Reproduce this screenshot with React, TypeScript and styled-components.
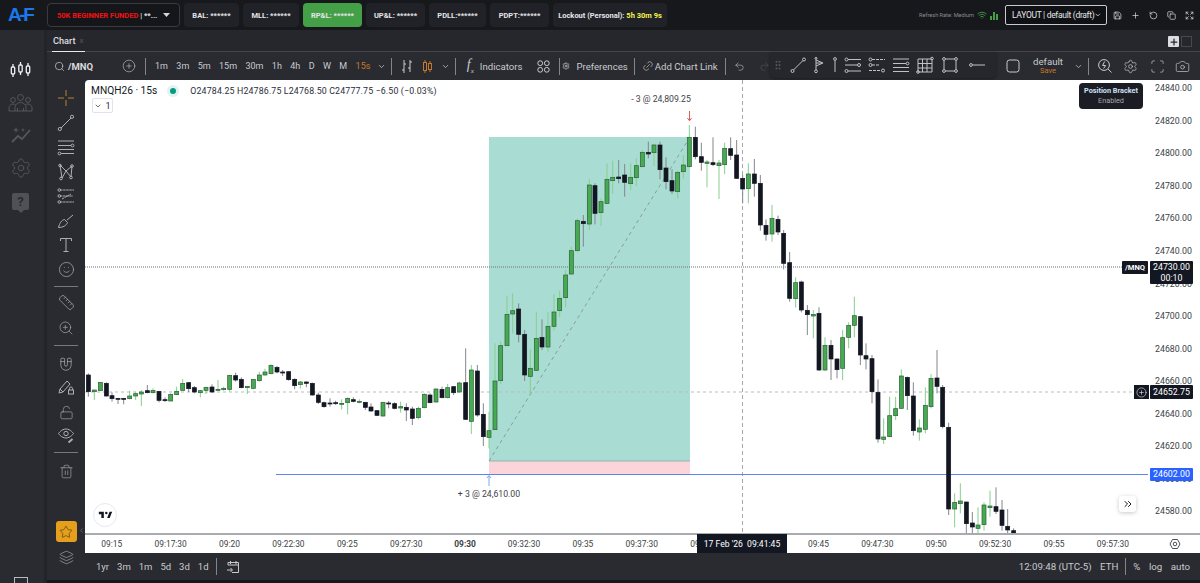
import React from 'react'
import styled, { createGlobalStyle } from 'styled-components'
import {
  Camera, ChevronDown, ChevronLeft, ChevronsRight, CirclePlus, Copy, Expand, Layers, Link2, LockOpen, Magnet,
  Plus, Redo2, RotateCcw, Ruler, Save, Scan, Search, Settings, Smile, Star, Trash2, Undo2, Wifi, ZoomIn
} from 'lucide-react'

const GlobalStyle = createGlobalStyle`
  html, body { margin: 0; padding: 0; height: 100%; overflow: hidden; background: #17181c; }
  #root { height: 100%; }
  * { box-sizing: border-box; }
`

const Page = styled.div`
  display: flex;
  flex-direction: column;
  width: 1200px;
  height: 583px;
  font-family: Roboto, "Liberation Sans", sans-serif;
  color: #d5d6d9;
  overflow: hidden;
`

/* ---------- shared icon helpers ---------- */
const Glyph = styled.svg<{ $w?: number; $h?: number; $ml?: number; $color?: string }>`
  flex: none;
  width: ${p => p.$w ?? 18}px;
  height: ${p => p.$h ?? 18}px;
  margin-left: ${p => p.$ml ?? 0}px;
  fill: none;
  stroke: ${p => p.$color ?? 'currentColor'};
  stroke-width: 1;
`
const Slot = styled.span<{ $ml?: number; $color?: string; $turn?: number }>`
  display: inline-flex;
  flex: none;
  margin-left: ${p => p.$ml ?? 0}px;
  color: ${p => p.$color ?? 'inherit'};
  transform: rotate(${p => p.$turn ?? 0}deg);
`

/* ---------- top bar ---------- */
const TopBar = styled.header`
  display: flex;
  align-items: center;
  flex: 0 0 30px;
  padding: 0 6.5px 0 0;
  background: #17181c;
`
const Logo = styled.div`
  width: 47px;
  padding-left: 8px;
  font: 900 19px "Liberation Sans", sans-serif;
  letter-spacing: -2.4px;
  color: #1a78ee;
`
const Pills = styled.div`
  display: flex;
  gap: 4px;
`
const Pill = styled.div<{ $w: number; $green?: boolean }>`
  display: flex;
  align-items: center;
  justify-content: center;
  width: ${p => p.$w}px;
  height: 24px;
  border-radius: 4px;
  background: ${p => (p.$green ? '#43a047' : '#212228')};
  font: 700 7.5px "Roboto", sans-serif;
  color: #e4e5e8;
  white-space: nowrap;
`
const AccountPill = styled(Pill)`
  justify-content: space-between;
  padding: 0 9px;
  background: #15161a;
  border: 1px solid #3a3b41;
`
const RedText = styled.span`
  color: #f01212;
`
const YellowText = styled.span`
  color: #f4f44a;
`
const Refresh = styled.div`
  display: flex;
  align-items: center;
  gap: 3px;
  margin-left: auto;
  font-size: 5.6px;
  color: #8b8c92;
`
const SignalBars = styled.svg`
  width: 8px;
  height: 9px;
  fill: #43a047;
`
const LayoutSelect = styled.div`
  display: flex;
  align-items: center;
  justify-content: space-between;
  width: 102px;
  height: 20px;
  margin: 0 0 0 7px;
  padding: 0 4px 0 6px;
  border: 1px solid #c9cacd;
  border-radius: 2px;
  background: #101114;
  font-size: 8.5px;
  letter-spacing: -0.3px;
  white-space: nowrap;
  color: #e6e7ea;
`
const TopActions = styled.div`
  display: flex;
  align-items: center;
  gap: 9px;
  margin-left: 5.5px;
  color: #d2d3d6;
`

/* ---------- shell ---------- */
const Shell = styled.div`
  display: flex;
  flex: 1;
  min-height: 0;
`
const Nav = styled.nav`
  display: flex;
  flex-direction: column;
  align-items: center;
  flex: 0 0 47px;
  padding: 29px 3px 0 0;
  gap: 10.5px;
  background: #2a2b30;
  border-right: 3px solid #232428;
  color: #55565c;
  overflow: hidden;
`
const NavItem = styled.div<{ $on?: boolean }>`
  display: flex;
  align-items: center;
  justify-content: center;
  height: 22px;
  width: 100%;
  color: ${p => (p.$on ? '#f1f1f3' : 'inherit')};
`
const NavChart = styled(Glyph)`
  stroke-width: 1.3;
`
const HelpBadge = styled.div`
  position: relative;
  display: flex;
  align-items: center;
  justify-content: center;
  width: 17px;
  height: 17px;
  margin-top: 2px;
  border-radius: 2px;
  background: #505157;
  font: 700 13px "Roboto", sans-serif;
  color: #2a2b30;
  &::after {
    content: '';
    position: absolute;
    bottom: -3px;
    left: 6px;
    border: 3px solid transparent;
    border-bottom: 0;
    border-top-color: #505157;
  }
`
const NavFoot = styled.div`
  width: 14px;
  height: 14px;
  margin-top: auto;
  margin-bottom: -8px;
  border: 1.4px solid #b9babd;
`
const Main = styled.main`
  display: flex;
  flex-direction: column;
  flex: 1;
  min-width: 0;
  background: #2a2b31;
`

/* ---------- tabs ---------- */
const TabRow = styled.div`
  position: relative;
  display: flex;
  align-items: flex-end;
  flex: 0 0 22px;
  padding-left: 5px;
  border-bottom: 1px solid #44454b;
  background: #26272c;
`
const Tab = styled.div`
  display: flex;
  gap: 4px;
  height: 22px;
  align-items: center;
  padding: 0 1px 1px 1px;
  margin-bottom: -1px;
  font: 500 9.2px "Roboto", sans-serif;
  color: #dcdde0;
  border-bottom: 1px solid #e8e8ea;
`
const TabClose = styled.span`
  color: #4c4d53;
  font-size: 8px;
`
const TabTools = styled.div`
  display: flex;
  align-items: center;
  gap: 2px;
  margin-left: auto;
  margin-right: 8px;
  margin-bottom: 4px;
`
const TabPlus = styled.div`
  display: flex;
  align-items: center;
  justify-content: center;
  width: 11px;
  height: 11px;
  border-radius: 1px;
  background: #dcdde0;
  color: #26272c;
`
const TabBox = styled.div`
  width: 11px;
  height: 11px;
  border: 1px solid #47484e;
`

/* ---------- chart toolbar ---------- */
const Toolbar = styled.div`
  position: relative;
  display: flex;
  align-items: center;
  flex: 0 0 28px;
  padding: 0 10px 0 7px;
  font-size: 9.6px;
  color: #c9cacd;
  white-space: nowrap;
`
const SymbolSearch = styled.div`
  display: flex;
  align-items: center;
  gap: 3px;
  width: 68px;
  font: 700 9.5px "Roboto", sans-serif;
  color: #d9dadd;
`
const Sep = styled.span<{ $m?: number; $r?: number }>`
  flex: none;
  width: 1px;
  height: 17px;
  margin: 0 ${p => p.$r ?? p.$m ?? 6}px 0 ${p => p.$m ?? 6}px;
  background: #84858a;
`
const Intervals = styled.div`
  display: flex;
  align-items: center;
  gap: 8.4px;
  font-size: 9px;
`
const Interval = styled.span<{ $on?: boolean }>`
  color: ${p => (p.$on ? '#c2792b' : '#c9cacd')};
`
const ToolLabel = styled.span<{ $gap?: number }>`
  display: flex;
  align-items: center;
  gap: ${p => p.$gap ?? 4}px;
`
const FxMark = styled.span`
  width: 10px;
  margin: 0 3px 0 5px;
  font: italic 14px "Liberation Serif", serif;
  color: #c9cacd;
  sub {
    font-size: 7px;
  }
`
const FloatingBar = styled.div`
  position: absolute;
  left: 723px;
  top: 0;
  display: flex;
  align-items: center;
  gap: 6px;
  width: 226px;
  height: 26px;
  padding: 0 5px;
  border-radius: 0 0 5px 5px;
  background: #26272c;
  box-shadow: 0 1px 3px rgba(0, 0, 0, 0.35);
  color: #c0c1c5;
`
const DragDots = styled.span`
  width: 6px;
  height: 10px;
  margin-right: 2px;
  background-image: radial-gradient(#57585e 1px, transparent 1.1px);
  background-size: 3px 3.4px;
`
const ToolbarRight = styled.div`
  display: flex;
  align-items: center;
  margin-left: auto;
`
const Preset = styled.div`
  display: flex;
  flex-direction: column;
  align-items: center;
  width: 44px;
  margin: 0 3.5px 0 5px;
  line-height: 10px;
  font-size: 9.6px;
  color: #c9cacd;
  small {
    font-size: 7.5px;
    color: #c2792b;
    line-height: 8px;
  }
`

/* ---------- workspace ---------- */
const Workspace = styled.div`
  display: flex;
  flex: 1;
  min-height: 0;
`
const Rail = styled.aside`
  position: relative;
  display: flex;
  flex-direction: column;
  align-items: center;
  flex: 0 0 38px;
  padding: 6px 0 8px;
  color: #aeafb3;
`
const RailBtn = styled.div<{ $h?: number; $gold?: boolean }>`
  display: flex;
  align-items: center;
  justify-content: center;
  flex: none;
  width: 100%;
  height: ${p => p.$h ?? 24.5}px;
  color: ${p => (p.$gold ? '#b5832c' : 'inherit')};
`
const RailRule = styled.div<{ $t: number; $b: number }>`
  flex: none;
  width: 24px;
  height: 1px;
  margin: ${p => p.$t}px 0 ${p => p.$b}px;
  background: #77787d;
`
const FavButton = styled.div`
  display: flex;
  align-items: center;
  justify-content: center;
  flex: none;
  width: 21px;
  height: 21px;
  margin-top: auto;
  border-radius: 3px;
  background: #e69f1c;
  color: #55400f;
`
const RailFoot = styled.div`
  display: flex;
  align-items: center;
  justify-content: center;
  flex: none;
  height: 30px;
`
const RailCollapse = styled.span`
  position: absolute;
  right: 0;
  bottom: 42px;
  color: #85868b;
`
const ChartColumn = styled.div`
  display: flex;
  flex-direction: column;
  flex: 1;
  min-width: 0;
`
const Pane = styled.section`
  position: relative;
  display: grid;
  grid-template-columns: 1fr 52px;
  grid-template-rows: 1fr 20px;
  flex: 1;
  min-height: 0;
  border-radius: 4px 0 0 0;
  background: #fff;
  overflow: hidden;
`
const Plot = styled.svg`
  display: block;
  width: 1063px;
  height: 453px;
  text {
    font: 8.7px Roboto, sans-serif;
    fill: #3f4249;
  }
`
const PriceAxis = styled.div`
  display: flex;
  flex-direction: column;
  margin-top: -8px;
  padding-left: 7px;
`
const PriceTick = styled.div`
  flex: 0 0 32.55px;
  display: flex;
  align-items: center;
  font-size: 8.8px;
  color: #3c3f46;
`
const TimeAxis = styled.div`
  display: flex;
  align-items: center;
  padding-left: 0;
  border-top: 2px solid #a9abb0;
  overflow: hidden;
`
const TimeTick = styled.div<{ $bold?: boolean }>`
  flex: 0 0 58.9px;
  text-align: center;
  font-size: 8.4px;
  font-weight: ${p => (p.$bold ? 700 : 400)};
  color: #3c3f46;
  &:first-child {
    margin-left: -2.7px;
  }
`
const AxisCorner = styled.div`
  display: flex;
  align-items: center;
  justify-content: center;
  padding-left: 1px;
  border-top: 2px solid #a9abb0;
  color: #4b4e55;
`
const Legend = styled.div`
  position: absolute;
  left: 6px;
  top: 5px;
`
const LegendRow = styled.div`
  display: flex;
  align-items: center;
`
const LegendTitle = styled.span`
  font-size: 10.2px;
  color: #131722;
`
const LiveDot = styled.span`
  width: 6px;
  height: 6px;
  margin: 0 14px 0 13px;
  border-radius: 50%;
  background: #089981;
  box-shadow: 0 0 0 3px #dff3ef;
`
const Ohlc = styled.span`
  font-size: 8.8px;
  letter-spacing: 0.15px;
  color: #2a2e39;
`
const LegendToggle = styled.div`
  display: flex;
  align-items: center;
  justify-content: center;
  gap: 3px;
  width: 21px;
  height: 15px;
  margin-top: 2px;
  margin-left: 1px;
  border: 1px solid #e0e3eb;
  border-radius: 2px;
  font-size: 9px;
  color: #2a2e39;
`
const BracketTip = styled.div`
  position: absolute;
  top: 3px;
  left: 994px;
  width: 64px;
  height: 26px;
  padding-top: 3px;
  border-radius: 4px;
  background: #1b1c24;
  text-align: center;
  font-size: 7.3px;
  line-height: 10px;
  color: #a6a8ae;
  b {
    display: block;
    color: #cfe0f5;
    font-weight: 700;
  }
`
const TvBadge = styled.div`
  position: absolute;
  left: 8px;
  top: 423px;
  display: flex;
  align-items: center;
  justify-content: center;
  width: 24px;
  height: 24px;
  border: 1px solid #e8e9f0;
  border-radius: 50%;
  background: #fff;
`
const SkipButton = styled.div`
  position: absolute;
  left: 1034px;
  top: 416px;
  display: flex;
  align-items: center;
  justify-content: center;
  width: 17px;
  height: 16px;
  border-radius: 3px;
  background: #fff;
  box-shadow: 0 1px 4px rgba(0, 0, 0, 0.22);
  color: #131722;
`
const DateTag = styled.div`
  position: absolute;
  left: 612px;
  bottom: 0;
  width: 90px;
  height: 19px;
  display: flex;
  align-items: center;
  justify-content: center;
  background: #131722;
  color: #fff;
  font-size: 8.6px;
  white-space: pre;
`
const SymbolTag = styled.div`
  position: absolute;
  left: 1037px;
  top: 181px;
  width: 26px;
  height: 13px;
  display: flex;
  align-items: center;
  justify-content: center;
  border-radius: 1px;
  background: #131722;
  color: #fff;
  font: 700 7.6px Roboto, sans-serif;
`
const PriceTag = styled.div<{ $top: number; $blue?: boolean; $tall?: boolean }>`
  position: absolute;
  left: 1065px;
  top: ${p => p.$top}px;
  width: 43px;
  height: ${p => (p.$tall ? 23 : p.$blue ? 13 : 14)}px;
  padding-top: ${p => (p.$tall ? 1 : 0)}px;
  display: flex;
  flex-direction: column;
  align-items: center;
  justify-content: ${p => (p.$tall ? 'flex-start' : 'center')};
  border-radius: 1px;
  background: ${p => (p.$blue ? '#2962ff' : '#131722')};
  color: #fff;
  font-size: 8.8px;
  line-height: 10.5px;
`
const PlusTag = styled.div`
  position: absolute;
  left: 1049px;
  top: 305px;
  width: 15px;
  height: 14px;
  display: flex;
  align-items: center;
  justify-content: center;
  background: #131722;
  color: #fff;
`

/* ---------- range bar ---------- */
const RangeBar = styled.div`
  display: flex;
  align-items: center;
  flex: 0 0 27px;
  padding: 0 10px 0 11px;
  font-size: 9.5px;
  color: #c9cacd;
`
const RangeItems = styled.div`
  display: flex;
  gap: 8px;
`
const RangeRight = styled.div`
  display: flex;
  align-items: center;
  gap: 8.5px;
  margin-left: auto;
  font-size: 9.7px;
`
const BottomEdge = styled.div`
  flex: 0 0 3px;
  background: #17181c;
`

/* ---------- candles, [x, wickTop, wickBottom, bodyTop, bodyBottom, up], traced per crop ---------- */
type Row = [number, number, number, number, number, number]
const segments: { ox: number; oy: number; rows: Row[] }[] = [
  {
    ox: 90, oy: 340,
    rows: [
      [-5,100,170,105,155,0],
      [13,150,180,150,155,1],[31,127,152,127,152,1],[49,127,170,130,168,0],[66,157,185,167,176,0],[84,175,192,175,177,0],
      [101,175,193,175,177,0],[119,152,178,168,176,1],[137,155,180,161,168,1],[154,150,198,156,162,1],[172,135,160,152,158,0],
      [189,145,160,151,158,1],[207,154,187,154,181,0],[225,172,186,179,182,0],[242,160,184,163,183,1],[260,140,165,154,164,1],
      [278,117,152,130,151,1],[296,127,156,128,146,0],[313,138,160,143,156,0],[331,150,172,152,158,1],[348,140,162,142,151,1],
      [366,133,158,141,156,0],[384,120,152,148,151,1],[401,140,152,145,149,1],[419,105,155,106,148,1],[437,98,125,107,120,0],
      [454,112,145,118,143,0],[472,138,162,139,143,1],[490,118,148,118,145,1],[508,95,125,105,122,1],[525,86,107,96,105,1],
      [543,73,103,76,101,1],[561,78,100,82,96,0],[578,90,108,96,98,0],[596,95,122,95,119,0],[614,115,148,118,137,0],
      [631,123,146,126,134,1],[649,124,142,126,130,0],[667,128,167,130,165,0],[685,158,192,165,187,0],[702,185,203,188,200,0],
      [720,175,200,189,191,0],[737,182,195,188,191,0],[755,178,208,190,193,1],[773,172,223,175,188,1],[790,172,187,179,184,0],
      [808,178,190,184,187,1],[826,186,210,187,202,0],[843,190,215,201,213,0],[861,210,228,212,226,0],[879,186,230,187,228,1],
      [896,183,205,189,192,0],[914,187,208,191,205,0],[932,185,218,200,204,1],[949,190,243,202,210,0],[967,200,255,207,235,0],
      [985,200,238,205,233,1],[1003,160,205,163,203,1],[1020,160,190,165,188,0],[1038,145,188,147,186,1],[1056,140,175,148,173,0],
      [1073,132,175,143,173,1],[1091,138,165,140,158,0],[1108,125,158,129,156,1],[1127,25,240,128,238,0],[1144,75,282,90,244,1],
      [1162,75,230,93,225,0],[1180,190,318,223,290,0],[1197,215,325,272,292,1]
    ]
  },
  {
    ox: 460, oy: 280,
    rows: [
      [105,190,450,303,449,1],[122,185,312,197,302,1],[141,47,198,103,197,1],[158,40,160,92,102,1],[176,70,187,87,163,0],
      [194,150,303,163,285,0],[211,208,340,265,289,1],[229,95,272,175,271,1],[246,118,210,172,201,0],[264,97,215,139,201,1],
      [282,42,152,96,139,1],[299,32,112,55,92,1]
    ]
  },
  {
    ox: 460, oy: 130,
    rows: [
      [317,418,532,435,503,1],[334,350,435,362,432,1],[352,265,365,272,362,1],[370,255,350,274,281,0],[388,148,300,165,282,1],
      [405,160,283,167,250,0],[423,205,288,215,248,1],[441,100,222,148,220,1],[458,92,192,142,152,1],[476,90,160,141,146,0],
      [494,102,200,135,157,0],[512,100,180,142,161,1],[529,85,168,107,143,1],[547,60,112,67,110,1],[565,35,85,67,72,0],
      [582,42,108,45,68,1],[600,35,148,45,119,0],[618,82,178,114,155,0],[636,118,192,152,183,0],[653,122,205,127,185,1],
      [670,75,145,105,125,1],[688,-15,112,22,110,1],[706,-10,88,22,80,0],[724,38,122,80,97,0],[741,90,172,96,100,1],
      [759,22,108,98,104,0],[777,90,207,99,107,1],[794,38,132,55,104,1],[812,22,90,56,76,0],[830,30,147,75,145,0]
    ]
  },
  {
    ox: 740, oy: 130,
    rows: [
      [8,135,220,145,177,0],[25,100,220,132,176,1],[43,87,200,132,160,0],[61,135,302,160,285,0],[78,268,332,286,313,0],
      [96,225,335,265,312,1],[114,257,315,268,306,0],[131,300,418,310,400,0],[149,366,515,398,505,0],[167,442,533,458,506,1],
      [184,452,547,456,540,0],[202,525,615,541,554,0],[220,540,625,553,558,1],[237,532,723,550,720,0],[255,622,723,646,720,1],
      [273,630,750,646,687,0],[291,685,745,687,719,0],[308,600,750,623,715,1],[326,577,655,586,622,1],[343,500,622,557,586,1],
      [361,558,705,560,675,0]
    ]
  },
  {
    ox: 840, oy: 340,
    rows: [
      [78,10,88,47,57,0],[96,45,190,56,155,0],[114,118,308,157,297,0],[131,235,312,291,298,1],[149,170,290,227,290,1],
      [167,170,240,206,227,1],[184,88,205,108,205,1],[202,110,210,112,167,0],[220,127,287,168,272,0],[238,238,302,264,276,1],
      [256,142,280,196,268,1],[273,102,205,115,200,1],[291,30,160,114,139,0],[308,135,265,142,260,0],[326,248,525,262,507,0],
      [344,460,562,487,507,1],[361,430,520,483,491,1],[379,485,585,486,551,0],[397,516,585,549,561,0],[414,502,585,555,565,1],
      [432,487,572,495,554,1],[450,452,530,498,503,1],[468,442,522,500,514,0],[486,480,572,510,556,0],[503,507,585,559,570,0],
      [521,565,585,572,585,0]
    ]
  }
]

const candles = segments.flatMap(s =>
  s.rows.map(([x, wt, wb, bt, bb, up]) => ({
    x: s.ox + x / 3,
    wickTop: s.oy + wt / 3,
    wickBottom: s.oy + wb / 3,
    top: s.oy + bt / 3,
    bottom: s.oy + bb / 3,
    up: up === 1
  }))
)

const prices = [24840, 24820, 24800, 24780, 24760, 24740, 24720, 24700, 24680, 24660, 24640, 24620, 24600, 24580]
const times = ['09:15', '09:17:30', '09:20', '09:22:30', '09:25', '09:27:30', '09:30', '09:32:30', '09:35', '09:37:30', '09:40', '09:42:30', '09:45', '09:47:30', '09:50', '09:52:30', '09:55', '09:57:30']
const intervals = ['1m', '3m', '5m', '15m', '30m', '1h', '4h', 'D', 'W', 'M']

const CandleChart = () => (
  <Plot viewBox="85 80 1063 453">
    <rect x="489" y="137" width="201" height="324" fill="#a9dcd2" />
    <rect x="489" y="461" width="201" height="13" fill="#fbd5da" />
    <line x1="489" x2="690" y1="461" y2="461" stroke="#86a8a2" strokeWidth="0.8" />
    <line x1="85" x2="1148" y1="267" y2="267" stroke="#6d7078" strokeWidth="1" strokeDasharray="1 1" />
    <line x1="85" x2="1148" y1="392" y2="392" stroke="#b9bbbf" strokeWidth="1" strokeDasharray="3 3" />
    <line x1="742.5" x2="742.5" y1="80" y2="533" stroke="#a8aaae" strokeWidth="1" strokeDasharray="4 3" />
    <line x1="489" x2="690" y1="461" y2="137" stroke="#8b9c99" strokeWidth="1" strokeDasharray="3.5 3.5" />
    <line x1="276" x2="1148" y1="474.5" y2="474.5" stroke="#5b86f0" strokeWidth="1" />
    {candles.map((c, i) => (
      <g key={i}>
        <line x1={c.x} x2={c.x} y1={c.wickTop} y2={c.wickBottom} stroke={c.up ? '#86cf8e' : '#84868c'} strokeWidth="1" />
        <rect
          x={c.x - 2}
          y={c.top}
          width="4"
          height={Math.max(c.bottom - c.top, 1)}
          fill={c.up ? '#46ab50' : '#131722'}
          stroke={c.up ? '#2f5f3b' : '#131722'}
          strokeWidth="0.7"
        />
      </g>
    ))}
    <text x="661" y="102" textAnchor="middle">- 3 @ 24,809.25</text>
    <path d="M689.5 111v9.5M687.4 118l2.1 2.8 2.1-2.8" fill="none" stroke="#e05a5a" strokeWidth="1" />
    <text x="489" y="497" textAnchor="middle">+ 3 @ 24,610.00</text>
    <path d="M489 486v-10M487 478l2-2.5 2 2.5" fill="none" stroke="#7aa7f2" strokeWidth="1" />
  </Plot>
)

const App = () => {
  return (
    <Page>
      <GlobalStyle />
      <TopBar>
        <Logo>A-F</Logo>
        <Pills>
          <AccountPill $w={133}>
            <span><RedText>50K BEGINNER FUNDED</RedText> | **...</span>
            <svg width="7" height="4" viewBox="0 0 7 4"><path d="M0 0h7L3.5 4z" fill="#d5d6d9" /></svg>
          </AccountPill>
          <Pill $w={55}>BAL: ******</Pill>
          <Pill $w={56}>MLL: ******</Pill>
          <Pill $w={59} $green>RP&amp;L: ******</Pill>
          <Pill $w={59}>UP&amp;L: ******</Pill>
          <Pill $w={57}>PDLL:******</Pill>
          <Pill $w={59}>PDPT:******</Pill>
          <Pill $w={114}><span>Lockout (Personal): <YellowText>5h 30m 9s</YellowText></span></Pill>
        </Pills>
        <Refresh>
          Refresh Rate: Medium
          <Wifi size={10} color="#43a047" strokeWidth={2} />
          <SignalBars viewBox="0 0 8 9">
            <rect x="0" y="5" width="2" height="4" />
            <rect x="3" y="1" width="2" height="8" />
            <rect x="6" y="3" width="2" height="6" />
          </SignalBars>
        </Refresh>
        <LayoutSelect>
          LAYOUT | default (draft)
          <ChevronDown size={10} strokeWidth={2.4} />
        </LayoutSelect>
        <TopActions>
          <Save size={9} />
          <Plus size={9} />
          <RotateCcw size={9} />
          <Copy size={9} />
          <Expand size={9} />
        </TopActions>
      </TopBar>

      <Shell>
        <Nav>
          <NavItem $on>
            <NavChart $w={23} $h={18} viewBox="0 0 23 18">
              <path d="M4 3v3M4 13v3M11.5 1v3M11.5 11v3M19 2v3M19 12v3" />
              <rect x="2.3" y="6" width="3.4" height="7" rx="1" />
              <rect x="9.8" y="4" width="3.4" height="7" rx="1" />
              <rect x="17.3" y="5" width="3.4" height="7" rx="1" />
            </NavChart>
          </NavItem>
          <NavItem>
            <Glyph $w={25} $h={20} viewBox="0 0 25 20">
              <circle cx="12.5" cy="4.5" r="3" />
              <circle cx="5" cy="7" r="2.4" />
              <circle cx="20" cy="7" r="2.4" />
              <path d="M7 18v-3.500c0-3 2.500-5 5.500-5s5.500 2 5.500 5V18M9.500 18v-3M15.500 18v-3M1 18v-3c0-2 1.500-4 4-4 1 0 2 .3 2.600 1M24 18v-3c0-2-1.500-4-4-4-1 0-2 .3-2.600 1M1 18h23" />
            </Glyph>
          </NavItem>
          <NavItem>
            <Glyph $w={22} $h={20} viewBox="0 0 22 20">
              <path d="M2 17l6-6 4 3 8-9" strokeWidth="1.8" />
              <path d="M6 2l.8 2.2L9 5l-2.2.8L6 8l-.8-2.2L3 5l2.2-.8zM13 3l.6 1.4L15 5l-1.4.6L13 7l-.6-1.4L11 5l1.4-.6z" fill="currentColor" stroke="none" />
            </Glyph>
          </NavItem>
          <NavItem><Settings size={22} strokeWidth={1} /></NavItem>
          <NavItem><HelpBadge>?</HelpBadge></NavItem>
          <NavFoot />
        </Nav>

        <Main>
          <TabRow>
            <Tab>Chart <TabClose>x</TabClose></Tab>
            <TabTools>
              <TabPlus><Plus size={10} strokeWidth={3} /></TabPlus>
              <TabBox />
            </TabTools>
          </TabRow>

          <Toolbar>
            <SymbolSearch>
              <Search size={11} strokeWidth={1.4} />
              /MNQ
            </SymbolSearch>
            <CirclePlus size={14} strokeWidth={1} />
            <Sep $m={9} />
            <Intervals>
              {intervals.map(i => <Interval key={i}>{i}</Interval>)}
              <Interval $on>15s</Interval>
            </Intervals>
            <Slot $ml={7}><ChevronDown size={9} /></Slot>
            <Sep $m={5} />
            <Glyph $w={12} $h={15} $ml={4} viewBox="0 0 12 15">
              <path d="M3 1v13M3 11H1M3 5h2M9 1v12M9 9H7M9 3h2" />
            </Glyph>
            <Glyph $w={11} $h={15} $ml={8.5} $color="#c2792b" viewBox="0 0 11 15">
              <path d="M3 1v13M8 2v11" />
              <rect x="1.5" y="3.5" width="3" height="8" fill="#2a2b31" />
              <rect x="6.5" y="4.5" width="3" height="6" fill="#2a2b31" />
            </Glyph>
            <Slot $ml={8}><ChevronDown size={9} /></Slot>
            <Sep $m={5.5} />
            <FxMark>f<sub>x</sub></FxMark>
            <ToolLabel>Indicators</ToolLabel>
            <Glyph $w={13} $h={13} $ml={15} viewBox="0 0 13 13">
              <circle cx="3.2" cy="3.2" r="2.4" /><circle cx="9.8" cy="3.2" r="2.4" />
              <circle cx="3.2" cy="9.8" r="2.4" /><circle cx="9.8" cy="9.8" r="2.4" />
            </Glyph>
            <Sep $m={9} $r={2} />
            <ToolLabel $gap={6}><Settings size={8} />Preferences</ToolLabel>
            <Sep $m={6} />
            <ToolLabel $gap={1}>
              <Slot $ml={1} $turn={-45}><Link2 size={12} strokeWidth={1.2} /></Slot>
              Add Chart Link
            </ToolLabel>
            <Sep $m={7} />
            <Slot $ml={1.5}><Undo2 size={11} strokeWidth={1.2} /></Slot>
            <Slot $ml={14} $color="#55565c"><Redo2 size={11} strokeWidth={1.2} /></Slot>

            <ToolbarRight>
              <Glyph $w={16} $h={16} viewBox="0 0 16 16"><rect x="2" y="2" width="12" height="12" rx="2.5" /></Glyph>
              <Preset>default<small>Save</small></Preset>
              <ChevronDown size={9} />
              <Sep $m={5.5} $r={8} />
              <Glyph $w={16} $h={16} viewBox="0 0 16 16">
                <circle cx="7" cy="7" r="5.4" /><path d="M11 11l3.5 3.5M7.6 3.5L5.6 7.5h3l-2 3" />
              </Glyph>
              <Slot $ml={9.5}><Settings size={15} strokeWidth={1.1} /></Slot>
              <Slot $ml={12}><Scan size={15} strokeWidth={1.1} /></Slot>
              <Slot $ml={10.5}><Camera size={15} strokeWidth={1.1} /></Slot>
            </ToolbarRight>

            <FloatingBar>
              <DragDots />
              <Glyph viewBox="0 0 18 18"><circle cx="3.5" cy="15" r="1.5" /><circle cx="15" cy="3.5" r="1.5" /><path d="M4.5 14L14 4.5" /></Glyph>
              <Glyph $w={13} viewBox="0 0 13 18"><path d="M3 3v11M3 4l7 3-7 3M3 7h6" /><circle cx="3" cy="15.3" r="1.4" /><circle cx="3" cy="2.3" r="1" /></Glyph>
              <Glyph $w={6} viewBox="0 0 6 18"><circle cx="3" cy="3" r="1.4" /><path d="M3 4.5V16" /></Glyph>
              <Glyph viewBox="0 0 18 18"><path d="M4 3.5h13M1 9h12M4 15h13" /><circle cx="2.5" cy="3.5" r="1.5" /><circle cx="15" cy="9" r="1.5" /><circle cx="2.5" cy="15" r="1.5" /></Glyph>
              <Glyph viewBox="0 0 18 18"><path d="M4 3.5h13M1 14.5h12M4 9l8 0" strokeDasharray="3 1" /><circle cx="2.5" cy="3.5" r="1.5" /><circle cx="2.5" cy="9" r="1.5" /><circle cx="15" cy="14.5" r="1.5" /></Glyph>
              <Glyph viewBox="0 0 18 18"><path d="M1 3h16M1 7.5h13M1 11.5h16M1 15.5h16" /><circle cx="15.5" cy="7.5" r="1.4" /></Glyph>
              <Glyph viewBox="0 0 18 18"><path d="M2 3h14v13H2zM2 7.5h14M2 12h14M6.5 3v13M11 3v13" /><circle cx="16" cy="2.5" r="1.3" /><circle cx="2" cy="16" r="1.3" /></Glyph>
              <Glyph $ml={1} viewBox="0 0 18 18"><path d="M3 3h12v12H3z" /><circle cx="3" cy="3" r="1.4" fill="#26272c" /><circle cx="15" cy="3" r="1.4" fill="#26272c" /><circle cx="3" cy="15" r="1.4" fill="#26272c" /><circle cx="15" cy="15" r="1.4" fill="#26272c" /></Glyph>
              <Glyph $ml={3} viewBox="0 0 18 18"><circle cx="3" cy="9" r="1.4" /><path d="M4.5 9H17" /></Glyph>
            </FloatingBar>
          </Toolbar>

          <Workspace>
            <Rail>
              <RailBtn $gold>
                <Glyph viewBox="0 0 18 18"><path d="M9 1v6M9 11v6M1 9h6M11 9h6" /></Glyph>
              </RailBtn>
              <RailBtn>
                <Glyph viewBox="0 0 18 18"><circle cx="2.8" cy="15" r="1.6" /><circle cx="15" cy="2.8" r="1.6" /><path d="M4 14L14 4" /></Glyph>
              </RailBtn>
              <RailBtn>
                <Glyph viewBox="0 0 18 18"><path d="M1 3h16M1 7.5h13M1 11.5h16M4 15.5h13" /><circle cx="15.5" cy="7.5" r="1.4" /><circle cx="2.5" cy="15.5" r="1.4" /></Glyph>
              </RailBtn>
              <RailBtn>
                <Glyph viewBox="0 0 18 18"><path d="M3 2l2 13L9 8l5 6 1-11-6 5z" /><circle cx="3" cy="2.5" r="1.3" /><circle cx="15" cy="3" r="1.3" /><circle cx="4" cy="15.5" r="1.3" /><circle cx="14" cy="14.5" r="1.3" /></Glyph>
              </RailBtn>
              <RailBtn>
                <Glyph viewBox="0 0 18 18"><path d="M3 3h14M3 9h13M3 15h14M5 12l9-5" strokeDasharray="2.5 0.6" /><circle cx="2.3" cy="3" r="1.3" /><circle cx="2.3" cy="9" r="1.3" /><circle cx="2.3" cy="15" r="1.3" /></Glyph>
              </RailBtn>
              <RailBtn>
                <Glyph viewBox="0 0 18 18"><path d="M1.5 15.5c1-4 3-7.5 6-8l3 3c-1 3-4.5 5-9 5zM10 8l6-5" /></Glyph>
              </RailBtn>
              <RailBtn>
                <Glyph viewBox="0 0 18 18"><path d="M3.5 5V2.5h11V5M9 2.5v13M6.500 15.500h5" /></Glyph>
              </RailBtn>
              <RailBtn><Smile size={17} strokeWidth={1} /></RailBtn>
              <RailRule $t={4} $b={3} />
              <RailBtn $h={25}><Ruler size={17} strokeWidth={1} /></RailBtn>
              <RailBtn $h={25}><ZoomIn size={16} strokeWidth={1} /></RailBtn>
              <RailRule $t={5} $b={5} />
              <RailBtn $h={23}><Slot $turn={135}><Magnet size={16} strokeWidth={1} /></Slot></RailBtn>
              <RailBtn $h={25}>
                <Glyph viewBox="0 0 18 18"><path d="M2 15l1-4 7-8 3 3-7 8zM3 11l3 3" /><rect x="11.5" y="12" width="5" height="4" /><path d="M12.5 12v-1.5a1.5 1.5 0 0 1 3 0V12" /></Glyph>
              </RailBtn>
              <RailBtn $h={27}><LockOpen size={15} strokeWidth={1} /></RailBtn>
              <RailBtn $h={18}>
                <Glyph viewBox="0 0 18 18"><path d="M1.5 7.5S4.5 3 9 3s7.500 4.500 7.500 4.500S13.500 12 9 12 1.500 7.500 1.500 7.500z" /><circle cx="9" cy="7.500" r="2.200" /><path d="M11.500 16.500l4-3.500" strokeWidth="1.800" /></Glyph>
              </RailBtn>
              <RailRule $t={8} $b={8} />
              <RailBtn $h={20}><Trash2 size={15} strokeWidth={1} /></RailBtn>
              <FavButton><Star size={14} strokeWidth={1.2} /></FavButton>
              <RailFoot><Layers size={15} strokeWidth={1} /></RailFoot>
              <RailCollapse><ChevronLeft size={7} /></RailCollapse>
            </Rail>

            <ChartColumn>
              <Pane>
                <CandleChart />
                <PriceAxis>
                  {prices.map(p => <PriceTick key={p}>{p.toFixed(2)}</PriceTick>)}
                </PriceAxis>
                <TimeAxis>
                  {times.map(t => <TimeTick key={t} $bold={t === '09:30'}>{t}</TimeTick>)}
                </TimeAxis>
                <AxisCorner>
                  <Glyph $w={12} $h={12} viewBox="0 0 12 12">
                    <path d="M3.5 1.5h5L11 6l-2.500 4.500h-5L1 6z" /><circle cx="6" cy="6" r="1.8" />
                  </Glyph>
                </AxisCorner>

                <Legend>
                  <LegendRow>
                    <LegendTitle>MNQH26 · 15s</LegendTitle>
                    <LiveDot />
                    <Ohlc>O24784.25 H24786.75 L24768.50 C24777.75 −6.50 (−0.03%)</Ohlc>
                  </LegendRow>
                  <LegendToggle><ChevronDown size={8} />1</LegendToggle>
                </Legend>
                <BracketTip><b>Position Bracket</b>Enabled</BracketTip>
                <TvBadge>
                  <svg width="15" height="12" viewBox="0 0 36 28" fill="#131722">
                    <path d="M14 6H2v6h6v9h6V6zm14 15h-6l5.600-15H34l-6 15z" />
                    <circle cx="20" cy="9" r="3" />
                  </svg>
                </TvBadge>
                <SkipButton><ChevronsRight size={12} strokeWidth={2} /></SkipButton>
                <DateTag>17 Feb '26  09:41:45</DateTag>
                <SymbolTag>/MNQ</SymbolTag>
                <PriceTag $top={181} $tall>24730.00<span>00:10</span></PriceTag>
                <PlusTag><CirclePlus size={11} strokeWidth={1.2} /></PlusTag>
                <PriceTag $top={305}>24652.75</PriceTag>
                <PriceTag $top={388} $blue>24602.00</PriceTag>
              </Pane>

              <RangeBar>
                <RangeItems>
                  <span>1yr</span><span>3m</span><span>1m</span><span>5d</span><span>3d</span><span>1d</span>
                </RangeItems>
                <Sep $m={7} />
                <Glyph $w={14} $h={14} $ml={2} viewBox="0 0 14 14">
                  <path d="M2 5V2.500h10.500V12.500H6M2 5h10.500M4.500 1v3M10 1v3M1 10h5M4.500 8l2 2-2 2" />
                </Glyph>
                <RangeRight>
                  <span>12:09:48 (UTC-5)</span>
                  <span>ETH</span>
                  <Sep $m={-1.5} />
                  <span>%</span>
                  <span>log</span>
                  <span>auto</span>
                </RangeRight>
              </RangeBar>
            </ChartColumn>
          </Workspace>
          <BottomEdge />
        </Main>
      </Shell>
    </Page>
  )
}

export default App
